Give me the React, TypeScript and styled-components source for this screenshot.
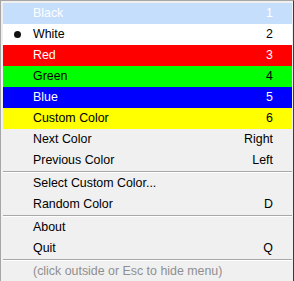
import React from "react";
import styled, { createGlobalStyle } from "styled-components";

const GlobalStyle = createGlobalStyle`
  html, body {
    margin: 0;
    padding: 0;
    background: #f0f0f0;
    overflow: hidden;
  }
`;

type ColorItem = { label: string; key: string; bg: string; fg: string; checked?: boolean };

const colorItems: ColorItem[] = [
  { label: "Black", key: "1", bg: "#c4defc", fg: "#ffffff" },
  { label: "White", key: "2", bg: "#ffffff", fg: "#000000", checked: true },
  { label: "Red", key: "3", bg: "#ff0000", fg: "#ffffff" },
  { label: "Green", key: "4", bg: "#00ff00", fg: "#000000" },
  { label: "Blue", key: "5", bg: "#0000ff", fg: "#ffffff" },
  { label: "Custom Color", key: "6", bg: "#ffff00", fg: "#000000" },
];

type Group = { label: string; key?: string }[];

const groups: Group[] = [
  [
    { label: "Next Color", key: "Right" },
    { label: "Previous Color", key: "Left" },
  ],
  [
    { label: "Select Custom Color..." },
    { label: "Random Color", key: "D" },
  ],
  [
    { label: "About" },
    { label: "Quit", key: "Q" },
  ],
];

const App: React.FC = () => {
  return (
    <>
      <GlobalStyle />
      <Menu>
        {colorItems.map((item) => (
          <Row key={item.label} $bg={item.bg} $fg={item.fg}>
            <Gutter>{item.checked && <Dot />}</Gutter>
            <Label>{item.label}</Label>
            <Shortcut>{item.key}</Shortcut>
          </Row>
        ))}
        {groups.map((group, i) => (
          <React.Fragment key={i}>
            {i > 0 && <Separator />}
            {group.map((item) => (
              <Row key={item.label}>
                <Gutter />
                <Label>{item.label}</Label>
                <Shortcut>{item.key}</Shortcut>
              </Row>
            ))}
          </React.Fragment>
        ))}
        <Separator />
        <Row $fg="#8f8f8f">
          <Gutter />
          <Label>(click outside or Esc to hide menu)</Label>
          <Shortcut />
        </Row>
      </Menu>
    </>
  );
};

const Menu = styled.div`
  width: 294px;
  box-sizing: border-box;
  background: #f0f0f0;
  border-top: 1px solid #a6a6a6;
  border-left: 1px solid #a6a6a6;
  border-right: 1px solid #3a3a3a;
  border-bottom: 1px solid #3a3a3a;
  padding: 2px 1px 2px 2px;
  display: flex;
  flex-direction: column;
  font-family: "Liberation Sans", Arial, sans-serif;
  font-size: 12.4px;
`;

const Row = styled.div<{ $bg?: string; $fg?: string }>`
  display: grid;
  grid-template-columns: 30px 1fr auto;
  align-items: center;
  height: 21px;
  padding-right: 19px;
  background: ${(p) => p.$bg ?? "transparent"};
  color: ${(p) => p.$fg ?? "#000000"};
  white-space: nowrap;
`;

const Gutter = styled.span`
  display: flex;
  align-items: center;
`;

const Dot = styled.span`
  width: 7px;
  height: 7px;
  margin-left: 11px;
  border-radius: 50%;
  background: #111111;
`;

const Label = styled.span`
  line-height: 21px;
`;

const Shortcut = styled.span`
  line-height: 21px;
  text-align: right;
`;

const Separator = styled.div`
  height: 0;
  border-top: 1px solid #a8a8a8;
  border-bottom: 1px solid #ffffff;
`;

export default App;
